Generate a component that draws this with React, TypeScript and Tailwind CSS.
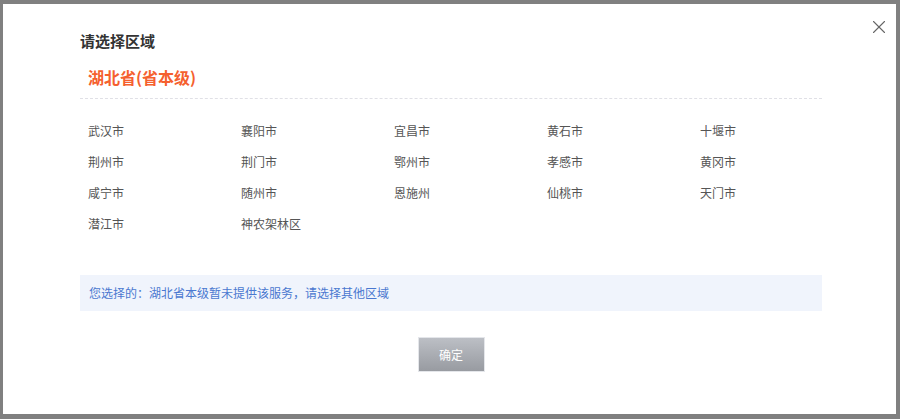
import { X } from "lucide-react";

const CITIES = [
  "武汉市", "襄阳市", "宜昌市", "黄石市", "十堰市",
  "荆州市", "荆门市", "鄂州市", "孝感市", "黄冈市",
  "咸宁市", "随州市", "恩施州", "仙桃市", "天门市",
  "潜江市", "神农架林区",
];

export default function App() {
  return (
    <div
      className="w-[900px] h-[419px] bg-[#808080] pt-[4px] pl-[3px] pr-[4px] overflow-hidden"
      style={{ fontFamily: '"Noto Sans CJK SC", "Noto Sans", sans-serif' }}
    >
      <div className="relative bg-white h-[410px] pl-[77px] pr-[74px] pt-[27px]">
        <button className="absolute right-[6px] top-[12px] text-[#666]">
          <X className="w-[22px] h-[22px]" strokeWidth={1.2} />
        </button>
        <h2 className="text-[15px] leading-[20px] font-bold text-[#333]">请选择区域</h2>
        <div className="mt-[14px] pl-[8px] pb-[9px] border-b border-dashed border-[#e0e0e6]">
          <span className="text-[16px] leading-[24px] font-bold text-[#f5602e]">湖北省(省本级)</span>
        </div>
        <div className="mt-[16px] pl-[8px] grid grid-cols-[repeat(5,153px)]">
          {CITIES.map((c) => (
            <div key={c} className="h-[31px] flex items-center text-[12px] text-[#555] cursor-pointer">
              {c}
            </div>
          ))}
        </div>
        <div className="mt-[36px] h-[36px] bg-[#f0f4fc] flex items-center pl-[9px] text-[12px] text-[#4a78d0]">
          您选择的：湖北省本级暂未提供该服务，请选择其他区域
        </div>
        <div className="mt-[26px] flex justify-center">
          <button className="w-[67px] h-[35px] bg-gradient-to-b from-[#bcbfc5] to-[#989ba1] border border-[#e4e6ea] text-white text-[12px]">
            确定
          </button>
        </div>
      </div>
    </div>
  );
}
